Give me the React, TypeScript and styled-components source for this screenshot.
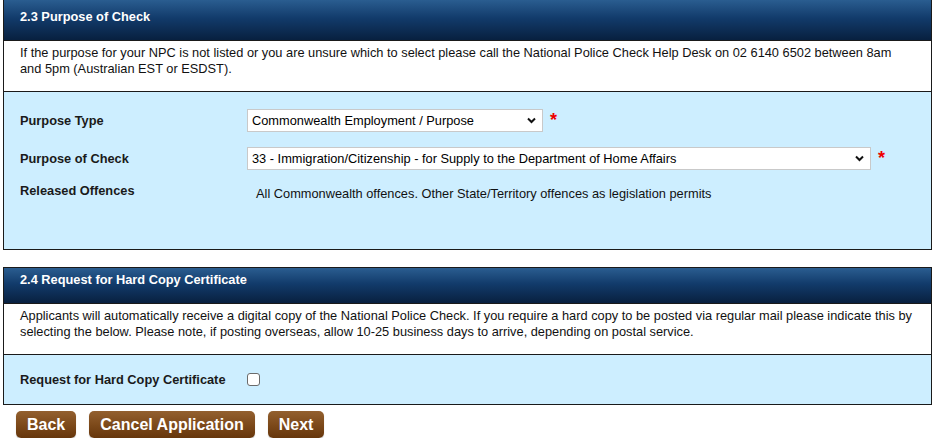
import React from "react";
import styled, { createGlobalStyle } from "styled-components";

const GlobalStyle = createGlobalStyle`
  body {
    margin: 0;
    background: #fff;
    font-family: "Liberation Sans", Arial, sans-serif;
    font-size: 12.8px;
    color: #111;
  }
`;

const Page = styled.div`
  width: 929px;
  padding: 0 3px;
`;

const Panel = styled.section<{ $gap?: number; $topBorder?: boolean }>`
  border: 1px solid #1a1a1a;
  border-top: ${(p) => (p.$topBorder ? "1px solid #1a1a1a" : "none")};
  margin-top: ${(p) => p.$gap ?? 0}px;
`;

const PanelHeader = styled.div<{ $height: number; $top: number }>`
  box-sizing: border-box;
  height: ${(p) => p.$height}px;
  padding: ${(p) => p.$top}px 16px 0;
  background: linear-gradient(to bottom, #2a5d90 0%, #123b6b 45%, #08203f 100%);
  color: #fff;
  font-weight: bold;
  font-size: 12.8px;
  line-height: 15px;
`;

const Intro = styled.div<{ $top: number; $right: number }>`
  box-sizing: border-box;
  height: 52px;
  padding: ${(p) => p.$top}px ${(p) => p.$right}px 0 16px;
  background: #fff;
  border-top: 1px solid #1a1a1a;
  border-bottom: 1px solid #1a1a1a;
  line-height: 16px;
  color: #111;
`;

const FormArea = styled.div<{ $height: number; $top: number }>`
  box-sizing: border-box;
  height: ${(p) => p.$height}px;
  padding: ${(p) => p.$top}px 16px 0;
  background: #cdeeff;
  display: flex;
  flex-direction: column;
`;

const Row = styled.div<{ $mt?: number; $align?: string }>`
  display: grid;
  grid-template-columns: 227px auto;
  align-items: ${(p) => p.$align ?? "center"};
  margin-top: ${(p) => p.$mt ?? 0}px;
`;

const Label = styled.div`
  font-weight: bold;
  color: #1a1a1a;
  line-height: 15px;
`;

const Field = styled.div`
  display: flex;
  align-items: center;
`;

const SelectWrap = styled.div<{ $width: number }>`
  position: relative;
  width: ${(p) => p.$width}px;
  height: 23px;
`;

const Select = styled.select`
  appearance: none;
  -webkit-appearance: none;
  box-sizing: border-box;
  width: 100%;
  height: 100%;
  margin: 0;
  padding: 0 20px 0 4px;
  border: 1px solid #c9c9c9;
  border-radius: 0;
  background: #fff;
  font-family: "Liberation Sans", Arial, sans-serif;
  font-size: 12.8px;
  color: #000;
  outline: none;
`;

const Chevron = styled.svg`
  position: absolute;
  right: 7px;
  top: 8px;
  pointer-events: none;
`;

const Required = styled.span`
  color: #ee0000;
  font-weight: bold;
  font-size: 18px;
  line-height: 18px;
  margin-left: 7px;
  position: relative;
  top: -1px;
`;

const Plain = styled.div`
  padding: 3px 0 0 9px;
  line-height: 15px;
  color: #111;
`;

const Checkbox = styled.input`
  appearance: none;
  -webkit-appearance: none;
  width: 13px;
  height: 13px;
  margin: 0;
  border: 1px solid #6b6b6b;
  border-radius: 3px;
  background: #fff;
`;

const Actions = styled.div`
  display: flex;
  gap: 13px;
  padding: 6px 0 0 13px;
`;

const Button = styled.button`
  height: 27px;
  padding: 0 11px;
  border: none;
  border-radius: 5px;
  background: linear-gradient(to bottom, #93602f 0%, #7b4819 55%, #66360c 100%);
  box-shadow: 0 1px 1px rgba(0, 0, 0, 0.25);
  color: #fff;
  font-family: "Liberation Sans", Arial, sans-serif;
  font-weight: bold;
  font-size: 16px;
  cursor: pointer;
`;

const SelectBox = ({ width, value }: { width: number; value: string }) => (
  <SelectWrap $width={width}>
    <Select defaultValue={value}>
      <option>{value}</option>
    </Select>
    <Chevron width="9" height="7" viewBox="0 0 9 7">
      <path d="M1 1.5 L4.5 5 L8 1.5" fill="none" stroke="#111" strokeWidth="2" />
    </Chevron>
  </SelectWrap>
);

export default function App() {
  return (
    <>
      <GlobalStyle />
      <Page>
        <Panel>
          <PanelHeader $height={40} $top={9}>2.3 Purpose of Check</PanelHeader>
          <Intro $top={4} $right={24}>
            If the purpose for your NPC is not listed or you are unsure which to select please call the
            National Police Check Help Desk on 02 6140 6502 between 8am and 5pm (Australian EST or ESDST).
          </Intro>
          <FormArea $height={157} $top={17}>
            <Row>
              <Label>Purpose Type</Label>
              <Field>
                <SelectBox width={296} value="Commonwealth Employment / Purpose" />
                <Required>*</Required>
              </Field>
            </Row>
            <Row $mt={15}>
              <Label>Purpose of Check</Label>
              <Field>
                <SelectBox
                  width={624}
                  value="33 - Immigration/Citizenship - for Supply to the Department of Home Affairs"
                />
                <Required>*</Required>
              </Field>
            </Row>
            <Row $mt={13} $align="start">
              <Label>Released Offences</Label>
              <Plain>All Commonwealth offences. Other State/Territory offences as legislation permits</Plain>
            </Row>
          </FormArea>
        </Panel>

        <Panel $gap={17} $topBorder>
          <PanelHeader $height={35} $top={4}>2.4 Request for Hard Copy Certificate</PanelHeader>
          <Intro $top={4} $right={10}>
            Applicants will automatically receive a digital copy of the National Police Check. If you
            require a hard copy to be posted via regular mail please indicate this by selecting the below.
            Please note, if posting overseas, allow 10-25 business days to arrive, depending on postal
            service.
          </Intro>
          <FormArea $height={49} $top={17}>
            <Row>
              <Label>Request for Hard Copy Certificate</Label>
              <Field>
                <Checkbox type="checkbox" />
              </Field>
            </Row>
          </FormArea>
        </Panel>

        <Actions>
          <Button>Back</Button>
          <Button>Cancel Application</Button>
          <Button>Next</Button>
        </Actions>
      </Page>
    </>
  );
}
